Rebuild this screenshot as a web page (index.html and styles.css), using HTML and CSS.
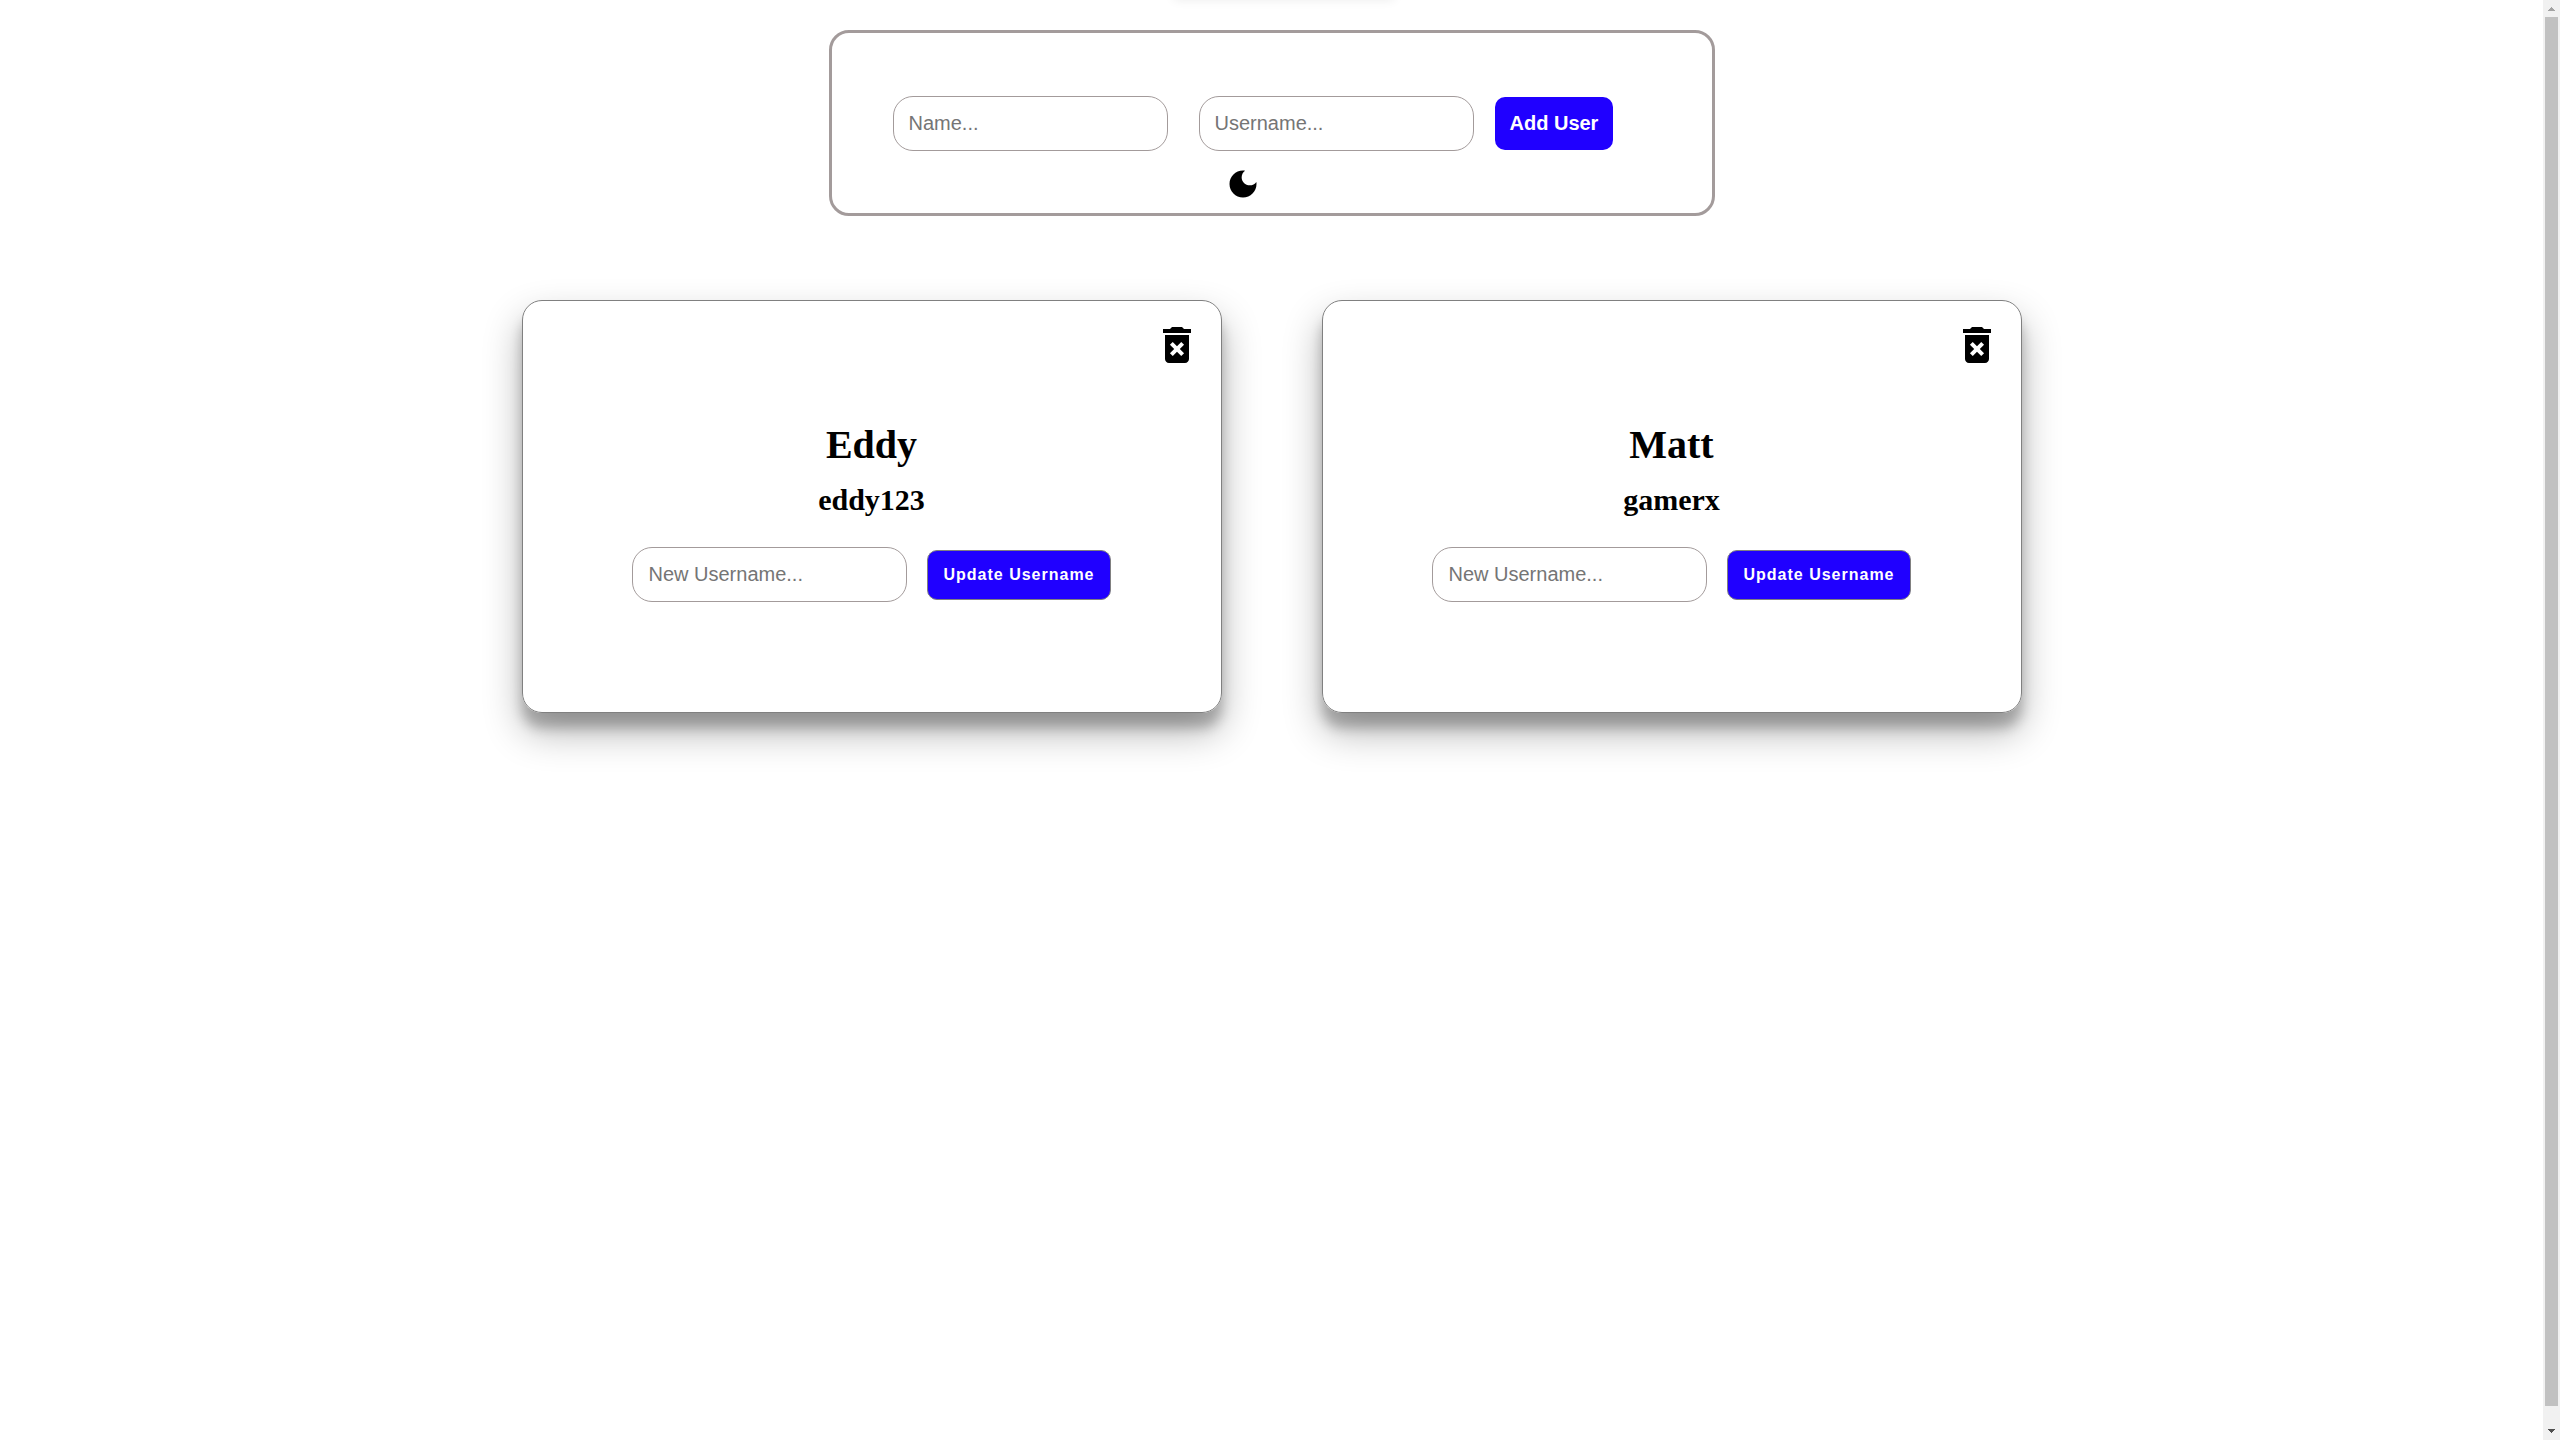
FILE: index.html
```html
<!DOCTYPE html>
<html lang="en">
<head>
<meta charset="utf-8">
<title>Users</title>
<link rel="stylesheet" href="styles.css">
</head>
<body>
<div class="toast" aria-hidden="true"></div>
<main class="page">
  <header class="panel">
    <form class="add-form">
      <input class="field" type="text" placeholder="Name..." aria-label="Name">
      <input class="field field-username" type="text" placeholder="Username..." aria-label="Username">
      <button class="btn" type="button">Add User</button>
    </form>
    <button class="icon-btn theme" type="button" aria-label="Toggle dark mode">
      <svg width="36" height="36" viewBox="0 0 24 24"><path d="M12 3c-4.97 0-9 4.03-9 9s4.03 9 9 9 9-4.03 9-9c0-.46-.04-.92-.1-1.36-.98 1.37-2.58 2.26-4.4 2.26-2.98 0-5.4-2.42-5.4-5.4 0-1.81.89-3.42 2.26-4.4C12.92 3.04 12.46 3 12 3z"/></svg>
    </button>
  </header>
  <section class="cards">
    <article class="card">
      <button class="icon-btn delete" type="button" aria-label="Delete Eddy">
        <svg width="48" height="48" viewBox="0 0 24 24"><path d="M6 19c0 1.1.9 2 2 2h8c1.1 0 2-.9 2-2V7H6v12zm2.46-7.12 1.41-1.41L12 12.59l2.12-2.12 1.41 1.41L13.41 14l2.12 2.12-1.41 1.41L12 15.41l-2.12 2.12-1.41-1.41L10.59 14l-2.13-2.12zM15.5 4l-1-1h-5l-1 1H5v2h14V4z"/></svg>
      </button>
      <h1 class="name">Eddy</h1>
      <h2 class="username">eddy123</h2>
      <form class="update-form">
        <input class="field" type="text" placeholder="New Username..." aria-label="New username for Eddy">
        <button class="btn btn-update" type="button">Update Username</button>
      </form>
    </article>
    <article class="card">
      <button class="icon-btn delete" type="button" aria-label="Delete Matt">
        <svg width="48" height="48" viewBox="0 0 24 24"><path d="M6 19c0 1.1.9 2 2 2h8c1.1 0 2-.9 2-2V7H6v12zm2.46-7.12 1.41-1.41L12 12.59l2.12-2.12 1.41 1.41L13.41 14l2.12 2.12-1.41 1.41L12 15.41l-2.12 2.12-1.41-1.41L10.59 14l-2.13-2.12zM15.5 4l-1-1h-5l-1 1H5v2h14V4z"/></svg>
      </button>
      <h1 class="name">Matt</h1>
      <h2 class="username">gamerx</h2>
      <form class="update-form">
        <input class="field" type="text" placeholder="New Username..." aria-label="New username for Matt">
        <button class="btn btn-update" type="button">Update Username</button>
      </form>
    </article>
  </section>
</main>
<div class="scrollbar" aria-hidden="true">
  <svg class="arrow" width="17" height="17" shape-rendering="crispEdges"><path fill="#a3a3a3" d="M8 7h1v1h1v1h1v1h1v1H5v-1h1V9h1V8h1z"/></svg>
  <div class="thumb"></div>
  <svg class="arrow" width="17" height="17" shape-rendering="crispEdges"><path fill="#505050" d="M5 6h7v1h-1v1h-1v1H9v1H8V9H7V8H6V7H5z"/></svg>
</div>
</body>
</html>
```
FILE: styles.css
```css
* {
  box-sizing: border-box;
}

body {
  margin: 0;
  display: flex;
  height: 100vh;
  overflow: hidden;
  background: #fff;
  color: #000;
  font-family: "Liberation Serif", "Times New Roman", serif;
}

.page {
  flex: 1;
  display: flex;
  flex-direction: column;
  align-items: center;
  padding-top: 30px;
}

.toast {
  position: fixed;
  bottom: 100%;
  left: 50%;
  width: 220px;
  height: 40px;
  margin-left: -106px;
  box-shadow: 0 0 10px rgba(0, 0, 0, 0.08);
}

.panel {
  width: 100%;
  max-width: 886px;
  display: flex;
  flex-direction: column;
  align-items: center;
  padding: 63px 58px 11px 0;
  border: 3px solid #a39b9b;
  border-radius: 20px;
}

.add-form {
  align-self: flex-start;
  display: flex;
  align-items: center;
  gap: 21px;
  padding-left: 61px;
}

.field-username {
  margin-left: 10px;
}

.field {
  width: 275px;
  height: 55px;
  padding: 15px;
  border: 1px solid #a39b9b;
  border-radius: 20px;
  background: #fff;
  font: 20px "Liberation Sans", Arial, sans-serif;
}

.field::placeholder {
  color: #757575;
}

.btn {
  padding: 15px;
  border: 0;
  border-radius: 10px;
  background: #2000ff;
  color: #fff;
  font: bold 20px/23px "Liberation Sans", Arial, sans-serif;
}

.btn-update {
  border: 1px solid #808080;
  font-size: 16px;
  line-height: 18px;
  letter-spacing: 1px;
}

.icon-btn {
  padding: 0;
  border: 0;
  background: none;
}

.icon-btn svg {
  display: block;
}

.theme {
  margin-top: 15px;
}

.cards {
  width: 100%;
  display: flex;
  justify-content: center;
  gap: 100px;
  margin-top: 84px;
}

.card {
  width: 100%;
  max-width: 700px;
  display: flex;
  flex-direction: column;
  align-items: center;
  padding: 20px 20px 110px;
  border: 1px solid #808080;
  border-radius: 20px;
  box-shadow: 0 19px 38px rgba(0, 0, 0, 0.3), 0 15px 12px rgba(0, 0, 0, 0.22);
}

.delete {
  align-self: flex-end;
}

.name {
  margin: 53px 0 0;
  font-size: 40px;
  line-height: 46px;
}

.username {
  margin: 15px 0 0;
  font-size: 30px;
  line-height: 34px;
}

.update-form {
  display: flex;
  align-items: center;
  gap: 20px;
  margin-top: 30px;
}

.scrollbar {
  width: 17px;
  display: flex;
  flex-direction: column;
  background: #f1f1f1;
}

.thumb {
  flex: 1;
  margin: 0 2px 17px;
  background: #c1c1c1;
}

.arrow {
  flex: none;
  display: block;
}
```
